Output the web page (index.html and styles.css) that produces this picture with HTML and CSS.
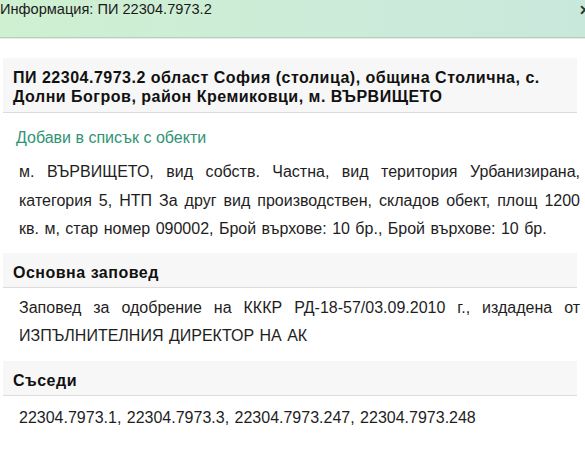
FILE: index.html
```html
<!DOCTYPE html>
<html lang="bg">
<head>
<meta charset="utf-8">
<title>Информация</title>
<link rel="stylesheet" href="styles.css">
</head>
<body>
<div class="panel">
  <div class="panel-head">
    <span class="panel-title">Информация: ПИ 22304.7973.2</span>
    <span class="close">✕</span>
  </div>
  <div class="panel-body">
    <div class="box-head title">ПИ 22304.7973.2 област София (столица), община Столична, с. Долни Богров, район Кремиковци, м. ВЪРВИЩЕТО</div>
    <a class="add-link" href="#">Добави в списък с обекти</a>
    <p class="text first">м. ВЪРВИЩЕТО, вид собств. Частна, вид територия Урбанизирана, категория 5, НТП За друг вид производствен, складов обект, площ 1200 кв. м, стар номер 090002, Брой върхове: 10 бр., Брой върхове: 10 бр.</p>
    <div class="box-head section">Основна заповед</div>
    <p class="text">Заповед за одобрение на КККР РД-18-57/03.09.2010 г., издадена от ИЗПЪЛНИТЕЛНИЯ ДИРЕКТОР НА АК</p>
    <div class="box-head section">Съседи</div>
    <p class="text last">22304.7973.1, 22304.7973.3, 22304.7973.247, 22304.7973.248</p>
  </div>
</div>
</body>
</html>
```
FILE: styles.css
```css
html, body {
  margin: 0;
  padding: 0;
  background: #ffffff;
}
body {
  font-family: "Liberation Sans", Arial, sans-serif;
  font-size: 16px;
  color: #1e1e1e;
  width: 585px;
  height: 461px;
  overflow: hidden;
}
.panel-head {
  position: relative;
  height: 37px;
  background: linear-gradient(90deg, #cff0d1 0%, #cdecd8 50%, #c9e8dc 100%);
  border-bottom: 1px solid #b7cdbf;
  box-shadow: 0 1px 0 #e3ede6;
}
.panel-title {
  display: block;
  font-size: 14.6px;
  line-height: 18px;
  color: #1a1a1a;
}
.close {
  position: absolute;
  right: -6px;
  top: 2px;
  font-size: 14px;
  font-weight: bold;
  line-height: 16px;
  color: #24382c;
}
.panel-body {
  padding-top: 20px;
}
.box-head {
  margin: 0 8px 0 3px;
  padding: 10px 10px 5px;
  background: #f7f7f7;
  border-bottom: 1px solid #dcdcdc;
  font-weight: bold;
  letter-spacing: 0.5px;
  line-height: 19px;
  color: #111;
}
.title {
  padding-bottom: 6px;
}
.add-link {
  display: block;
  margin: 15px 0 0 16px;
  line-height: 19px;
  color: #2f9474;
  text-decoration: none;
}
.text {
  margin: 6px 5px 10px 19px;
  line-height: 28.6px;
  word-spacing: 1px;
  text-align: justify;
}
.text.first {
  margin-top: 11px;
  margin-bottom: 9px;
}
.text.last {
  margin-top: 8px;
}
```
